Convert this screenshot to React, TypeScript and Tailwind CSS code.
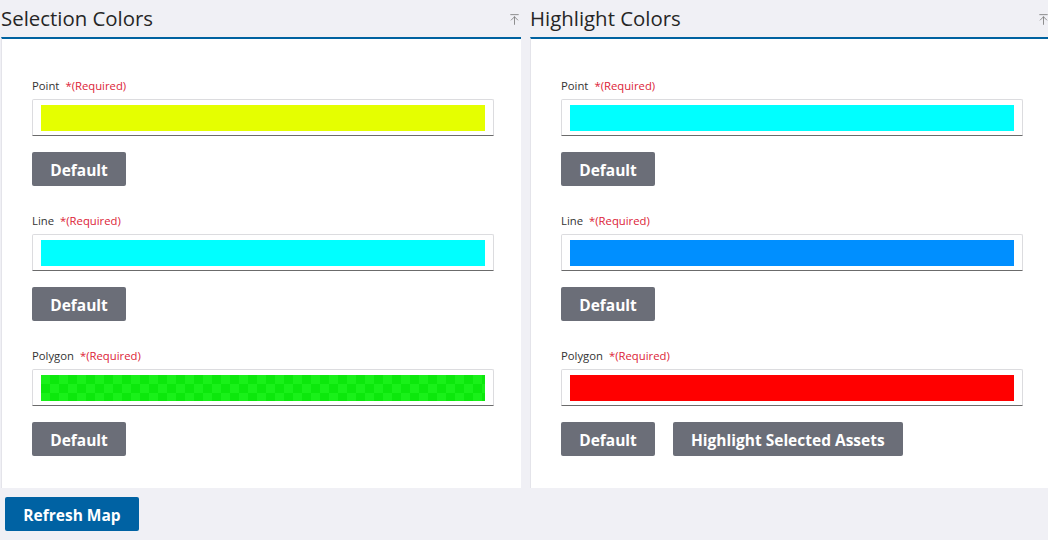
import { ArrowUpToLine } from "lucide-react";

interface ColorFieldProps {
  label: string;
  swatch: string;
  extra?: string;
}

function ColorField({ label, swatch, extra }: ColorFieldProps) {
  return (
    <div className="flex flex-col">
      <div className="flex items-center text-[11.3px] leading-[14px] text-[#333]">
        <span>{label}</span>
        <span className="ml-[6px] text-[#dc2438]">*(Required)</span>
      </div>
      <div className="mt-[6px] h-[37px] w-[462px] rounded-t-[2px] border border-[#dcdcdf] border-b-[#6b6b6b] bg-white px-[8px] pt-[5px]">
        <div className={`h-[26px] w-full ${swatch}`} />
      </div>
      <div className="mt-[16px] flex gap-[18px]">
        <button className="h-[34px] w-[94px] rounded-[2px] bg-[#6b6e78] pt-[3px] text-[15.5px] font-bold text-white">
          Default
        </button>
        {extra && (
          <button className="h-[34px] rounded-[2px] bg-[#6b6e78] px-[18px] pt-[3px] text-[15.5px] font-bold text-white">
            {extra}
          </button>
        )}
      </div>
    </div>
  );
}

interface PanelProps {
  title: string;
  fields: ColorFieldProps[];
}

function Panel({ title, fields }: PanelProps) {
  return (
    <section className="flex w-[520px] shrink-0 flex-col">
      <header className="flex h-[37px] items-center justify-between">
        <h2 className="text-[20.4px] leading-none text-[#262626]">{title}</h2>
        <ArrowUpToLine className="mt-[2px] h-[13px] w-[13px] text-[#777]" strokeWidth={1.5} />
      </header>
      <div className="flex flex-col gap-[28px] border-t-2 border-[#0062a0] border-l border-l-[#e4e4ea] bg-white pb-[32px] pl-[30px] pt-[40px]">
        {fields.map((f) => (
          <ColorField key={f.label} {...f} />
        ))}
      </div>
    </section>
  );
}

export default function App() {
  const checker =
    "bg-[conic-gradient(#0ce80c_25%,#19f119_0_50%,#0ce80c_0_75%,#19f119_0)] bg-[length:18px_18px]";

  return (
    <div
      className="h-[540px] w-[1048px] overflow-hidden bg-[#f0f0f5] text-[#333]"
      style={{ fontFamily: '"Open Sans", "Noto Sans", sans-serif' }}
    >
      <div className="flex gap-[9px] pl-[1px]">
        <Panel
          title="Selection Colors"
          fields={[
            { label: "Point", swatch: "bg-[#e5ff00]" },
            { label: "Line", swatch: "bg-[#00ffff]" },
            { label: "Polygon", swatch: checker },
          ]}
        />
        <Panel
          title="Highlight Colors"
          fields={[
            { label: "Point", swatch: "bg-[#00ffff]" },
            { label: "Line", swatch: "bg-[#008fff]" },
            { label: "Polygon", swatch: "bg-[#ff0000]", extra: "Highlight Selected Assets" },
          ]}
        />
      </div>
      <div className="pl-[5px] pt-[9px]">
        <button className="h-[34px] w-[134px] rounded-[2px] bg-[#0062a3] pt-[3px] text-[15.5px] font-bold text-white">
          Refresh Map
        </button>
      </div>
    </div>
  );
}
